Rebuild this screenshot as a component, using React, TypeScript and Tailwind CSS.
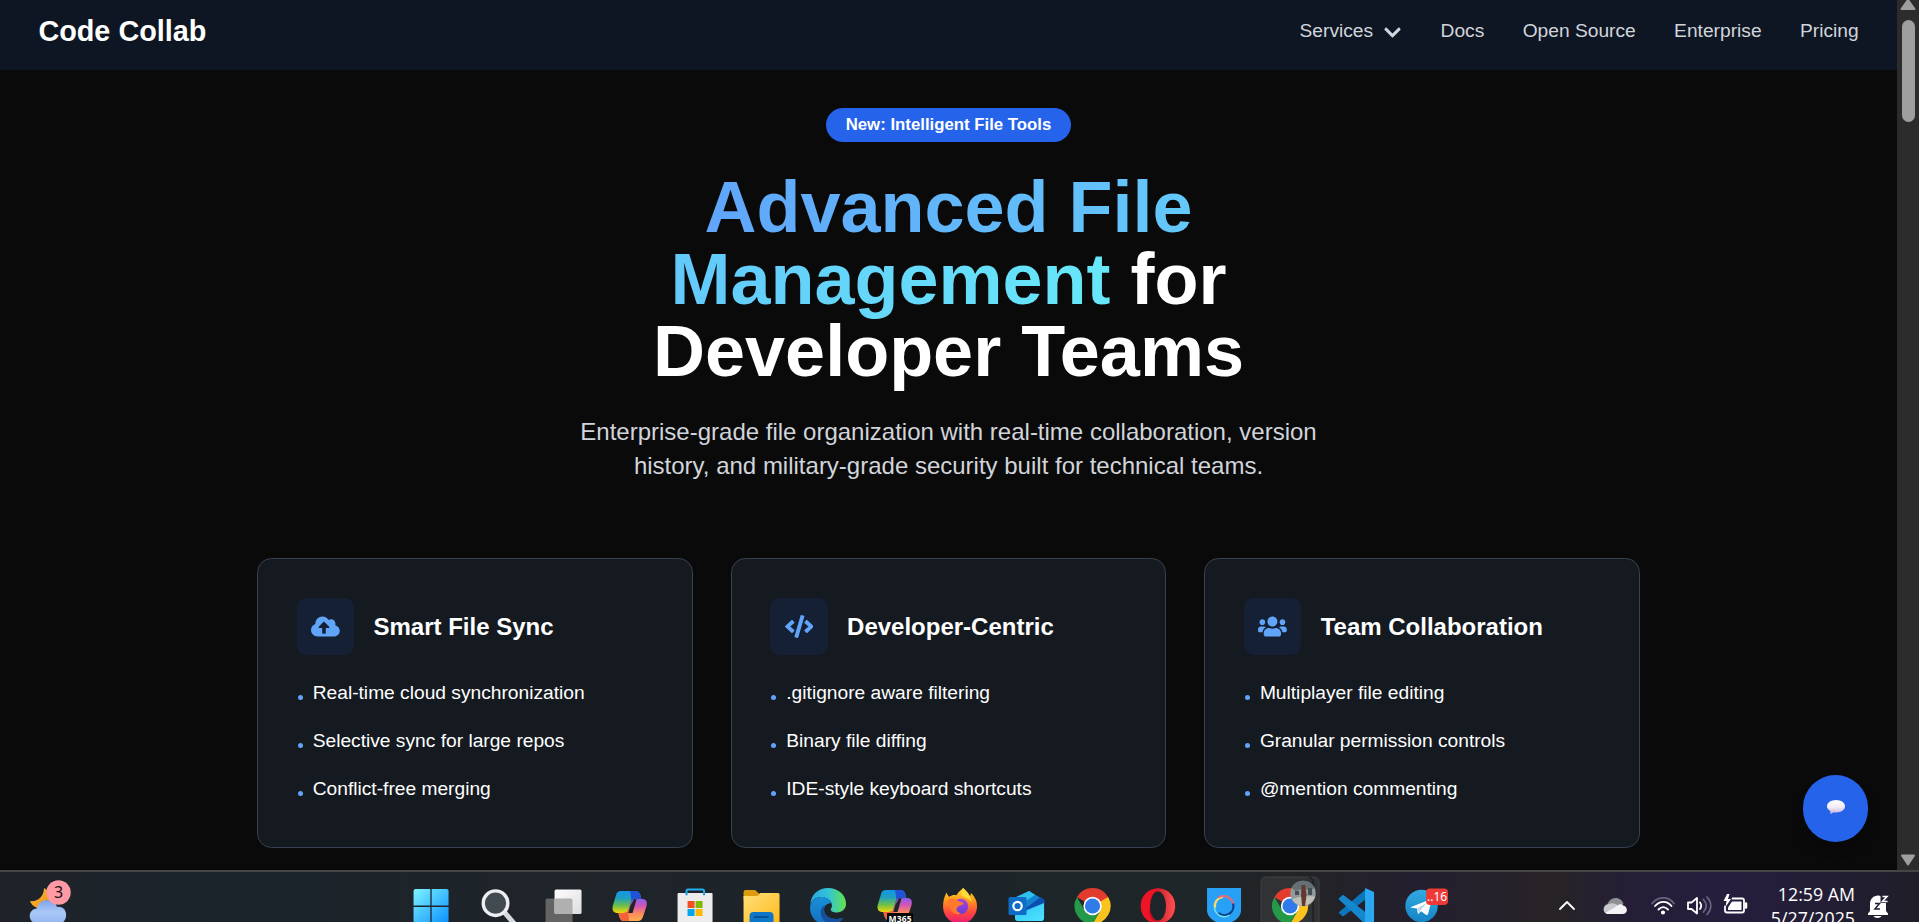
import { FaChevronDown, FaCloudUploadAlt, FaCode, FaUsers } from "react-icons/fa";
import type { ReactNode } from "react";

const navLinks = ["Docs", "Open Source", "Enterprise", "Pricing"];

const cards: { title: string; icon: ReactNode; items: string[] }[] = [
  {
    title: "Smart File Sync",
    icon: <FaCloudUploadAlt className="h-[23px] w-[28.8px]" />,
    items: ["Real-time cloud synchronization", "Selective sync for large repos", "Conflict-free merging"],
  },
  {
    title: "Developer-Centric",
    icon: <FaCode className="h-[23px] w-[28.8px]" />,
    items: [".gitignore aware filtering", "Binary file diffing", "IDE-style keyboard shortcuts"],
  },
  {
    title: "Team Collaboration",
    icon: <FaUsers className="h-[23px] w-[28.8px]" />,
    items: ["Multiplayer file editing", "Granular permission controls", "@mention commenting"],
  },
];

function Icon({ children }: { children: ReactNode }) {
  return (
    <svg viewBox="0 0 66 50" className="h-[50px] w-[66.1px] shrink-0">
      {children}
    </svg>
  );
}

function Gradient({ id, stops, vertical }: { id: string; stops: string[]; vertical?: boolean }) {
  return (
    <linearGradient id={id} x1="0" y1="0" x2={vertical ? "0" : "1"} y2="1">
      {stops.map((c, i) => (
        <stop key={i} offset={i / (stops.length - 1)} stopColor={c} />
      ))}
    </linearGradient>
  );
}

function ChromeShape() {
  return (
    <g>
      <path d="M33 34 17.400 25A18 18 0 0 1 48.600 25Z" fill="#e33b2e" />
      <path d="M33 25H48.600A18 18 0 0 1 33 52L40.800 38.500Z" fill="#fcc31e" />
      <path d="M17.400 25A18 18 0 0 0 33 52L40.800 38.500 33 43 25.200 38.500Z" fill="#249a48" />
      <path d="M17.400 25H48.600L40 30H26Z" fill="#e33b2e" />
      <circle cx="33" cy="34" r="9.200" fill="#fff" />
      <circle cx="33" cy="34" r="7.600" fill="#2f7bea" />
    </g>
  );
}

function CopilotShape({ id }: { id: string }) {
  return (
    <g>
      <defs>
        <Gradient id={`${id}a`} vertical stops={["#1496e8", "#1f9fc0", "#6cc04a", "#f5d50a"]} />
        <Gradient id={`${id}b`} vertical stops={["#8b5cf0", "#d558b0", "#ff8a5a", "#ffb04c"]} />
      </defs>
      <path d="M25 19h14c3 0 4.500 1.500 5.300 4l1 3.500h-5.300c-3 0-4.500 1.500-5.300 4l-2 6.500c-.8 2.500-2 4-5 4h-6c-4 0-6-2.500-5-7l3.300-11c.8-2.500 2-4 5-4z" fill={`url(#${id}a)`} />
      <path d="M34 19h5c3 0 4.500 1.500 5.300 4l1 3.500h-5.300c-2.500 0-3.600 1-4.500 2.500z" fill="#2152d8" />
      <path d="M40 27h6c4 0 5.500 2.500 4.500 7l-3.300 10c-.8 3-2.500 5-5.500 5H28c-3 0-4-2-5-5l-.6-3h5c3 0 4.500-1.500 5.300-4l2-6c.8-2.500 2.300-4 5.300-4z" fill={`url(#${id}b)`} />
      <path d="M22.400 41h5c2.500 0 3.800-.7 4.700-2.400L33 49h-5c-3 0-4-2-5-5z" fill="#f4623a" />
      <path d="M34.500 33.500 38 27.300h2.500L36.500 41h-4.300z" fill="#1d242a" />
    </g>
  );
}

function TaskIcons() {
  return (
    <>
      <Icon>
        <defs><linearGradient id="win" gradientUnits="userSpaceOnUse" x1="16" y1="17" x2="50" y2="52"><stop stopColor="#7df3ff" /><stop offset="1" stopColor="#0a8fff" /></linearGradient></defs>
        <path d="M15.500 19a2 2 0 0 1 2-2H32.300V33.600H15.500zM33.600 17H48.500a2 2 0 0 1 2 2V33.600H33.600zM15.500 35H32.300V52H15.500zM33.600 35H50.500V52H33.600z" fill="url(#win)" />
      </Icon>
      <Icon>
        <path d="m41 41 9.500 11" stroke="#d6d9dd" strokeWidth="5" strokeLinecap="round" />
        <circle cx="31.500" cy="31.200" r="12.300" fill="#434b51" stroke="#eceeef" strokeWidth="3.400" />
      </Icon>
      <Icon>
        <defs><Gradient id="tv" stops={["#ffffff", "#dcdcdc"]} /></defs>
        <rect x="15.500" y="26.500" width="27" height="28" rx="1.500" fill="#646464" />
        <rect x="24.500" y="17.500" width="27" height="24.500" rx="1.500" fill="url(#tv)" />
        <path d="M24.500 26.500h16.500a1.500 1.500 0 0 1 1.500 1.500v14H26a1.500 1.500 0 0 1-1.500-1.500z" fill="#b0b0b0" />
      </Icon>
      <Icon><CopilotShape id="cp" /></Icon>
      <Icon>
        <path d="M24.500 24v-5a1.500 1.500 0 0 1 1.500-1.500h14.500a1.500 1.500 0 0 1 1.500 1.500v5" fill="none" stroke="#20b0ee" strokeWidth="2" />
        <path d="M15.500 22a1 1 0 0 1 1-1h33a1 1 0 0 1 1 1v32h-35z" fill="#ececec" />
        <path d="M24.500 21v2.300M42 21v2.300" stroke="#1599dc" strokeWidth="2" />
        <path d="M25.500 29h7v7h-7z" fill="#f25022" /><path d="M33.500 29h7v7h-7z" fill="#7fba00" />
        <path d="M25.500 37h7v7h-7z" fill="#00a4ef" /><path d="M33.500 37h7v7h-7z" fill="#ffb900" />
      </Icon>
      <Icon>
        <defs><Gradient id="fold" stops={["#ffe07a", "#ffb91c"]} /></defs>
        <path d="M15.500 20a2 2 0 0 1 2-2h9.500l4 3.500h18v6H15.500z" fill="#dc9b0c" />
        <path d="M15.500 24h14l3-3H50a1.500 1.500 0 0 1 1.500 1.500V52h-36z" fill="url(#fold)" />
        <path d="M21.500 52v-8a4 4 0 0 1 4-4h16a4 4 0 0 1 4 4v8z" fill="#0d76c6" />
        <path d="M26 45h14.500" stroke="#074e91" strokeWidth="1.800" />
      </Icon>
      <Icon>
        <defs>
          <linearGradient id="edge"><stop stopColor="#28a6de" /><stop offset=".5" stopColor="#33c3d8" /><stop offset="1" stopColor="#64e34c" /></linearGradient>
          <Gradient id="edgeb" vertical stops={["#178fda", "#1670bd"]} />
        </defs>
        <path d="M15.300 32C16 22 24 16 33 16c10 0 18 7 18 15.500 0 5.500-4 9-9 9-4 0-6.300-1.300-6.300-3 0-1 1.200-1.700 1.200-4 0-5-5-8.500-10.500-8.500-5 0-9 2.500-11.100 7z" fill="url(#edge)" />
        <path d="M15 36c0-7 5.500-11 11.500-11 5 0 9 2.700 10 6.500-2.500-.8-7.500 1-7.500 6.500 0 6 6.500 9 11.500 9 4 0 6-1.500 7.500-1C45 51 39 53 33 53c-10 0-18-7-18-17z" fill="url(#edgeb)" />
        <path d="M30 33c-7 4-5 14 2 18h6c5-.5 8-2 10-5-1.500-.5-3.500 1-7.500 1-5 0-11.500-3-11.500-9 0-2 .5-4 1-5z" fill="#154f9e" />
      </Icon>
      <Icon>
        <g transform="translate(0 -1)"><CopilotShape id="cm" /></g>
        <rect x="26" y="41" width="26" height="12" fill="#050505" />
        <text x="39" y="49.500" textAnchor="middle" fontSize="8.500" fontWeight="700" fill="#fff" fontFamily="Noto Sans, sans-serif" textLength="23">M365</text>
      </Icon>
      <Icon>
        <defs><Gradient id="ff" vertical stops={["#ffe226", "#ff9a1f", "#ff4a3c", "#e8177b"]} /><Gradient id="ffp" vertical stops={["#a942e6", "#6a3fd0"]} /></defs>
        <path d="M19.500 20.500c.8 2 1.500 3.300 2.500 4.300 3-1.800 5-2 7.500-1.500 2-4 4.500-4.800 6.500-7.300 3 2.500 4 5 7 8.500l1-3.500c4 4 6 8 6 13 0 9.500-7.500 18-17 18s-17-8-17-17.500c0-5 1-9.500 3.500-14z" fill="url(#ff)" />
        <circle cx="33.500" cy="34.500" r="7.700" fill="url(#ffp)" />
        <path d="M20 29c3-3.500 7-3 9.500-1l3 1.500c3 .5 4 1 4 2.500-2 1.800-5 1.300-6.500 3.500-1.500 3 1 5.500 4 5.500-4 3-10 0-11-5.500z" fill="#ff7a2b" />
        <path d="M36 16c5 4 8.500 9 8.500 14-1.800-2-3-3.200-6.500-4.500-2.500-1-4-1.500-4-3.500 0-2.500 1.500-4 2-6z" fill="#ffd83a" />
      </Icon>
      <Icon>
        <defs><Gradient id="olb" stops={["#28c4f4", "#52e2ff"]} /></defs>
        <path d="m23 26 13-7 15 9v18a3 3 0 0 1-3 3H25a3 3 0 0 1-3-3z" fill="#1482d2" />
        <path d="M23 25 36 19l6 4-19 12z" fill="#2fc1f0" />
        <path d="m30 38 18-13 3.500 3v4L34 44z" fill="#0a4fae" />
        <path d="M22 43 51 31v15a3 3 0 0 1-3 3H25a3 3 0 0 1-3-3z" fill="url(#olb)" />
        <rect x="15.500" y="25" width="18" height="18" rx="1.500" fill="#0f6cc6" />
        <circle cx="24.500" cy="34" r="4.200" fill="none" stroke="#fff" strokeWidth="2.200" />
      </Icon>
      <Icon><g transform="translate(.5 0)"><ChromeShape /></g></Icon>
      <Icon>
        <defs><linearGradient id="opb"><stop stopColor="#b20018" /><stop offset="1" stopColor="#ff5252" /></linearGradient></defs>
        <ellipse cx="33" cy="34" rx="17.300" ry="17.500" fill="#f0101f" />
        <path d="M33 16.500c22.500 0 22.500 35 0 35-4 0-8-1.500-10.500-4.500l6-29z" fill="url(#opb)" />
        <path d="M33 16.500c-23 0-23 35 0 35-12-2-12-31 0-33z" fill="#ec1427" />
        <ellipse cx="33" cy="34" rx="8" ry="14.500" fill="#1d242a" />
      </Icon>
      <Icon>
        <path d="M16 16h34v22c0 8-8 12.500-17 15-9-2.500-17-7-17-15z" fill="#27a0f5" />
        <path d="M24 36a9 9 0 0 1 8-11" fill="none" stroke="#f8dc68" strokeWidth="2.200" />
        <path d="M27 25.500a10 10 0 0 1 15.200 7" fill="none" stroke="#ee6972" strokeWidth="2" />
        <path d="M42 31.500a9 9 0 0 1-14.500 9.500" fill="none" stroke="#0b3f91" strokeWidth="2.200" />
        <path d="M23.500 35a9.600 9.600 0 0 0 15 8" fill="none" stroke="#74e7df" strokeWidth="1.400" />
      </Icon>
      <Icon>
        <path d="M4 50V10a5 5 0 0 1 5-5H57a5 5 0 0 1 5 5V50" fill="#303234" stroke="#414345" />
        <path d="M51.500 5a5 5 0 0 1 4.500 5V50" fill="none" stroke="#222527" strokeWidth="2" />
        <ChromeShape />
        <circle cx="46" cy="21.500" r="12.700" fill="#929b9b" />
        <path d="M34.500 16a12.700 12.700 0 0 1 23 0l-4 2-8-1-7 2z" fill="#657074" />
        <path d="M35 27.500c5-3 15-4 23-3a12.700 12.700 0 0 1-20 6.500z" fill="#c0c0b7" />
        <path d="M44.500 13h3.500l1.500 10-1.500 11h-3l-1-11z" fill="#65382f" />
        <path d="M51 16h4v7h-4zM38 19h4v4h-4z" fill="#444d50" />
      </Icon>
      <Icon>
        <path d="m15.500 27 3-3c1-1 2-.8 3 0L43 41v9.500z" fill="#1183cb" />
        <path d="m15.500 40.500 3 3c1 1 2 .8 3 0L43 27V17z" fill="#0c76ba" />
        <path d="m42 16 9 4v30l-9 2z" fill="#2aa8f2" />
        <path d="m15.500 27 3-3c1-1 2-.8 3 0L42 40v12z" fill="#1687cf" />
      </Icon>
      <Icon>
        <defs><Gradient id="tg" vertical stops={["#32a9e1", "#1585c5"]} /></defs>
        <circle cx="32.500" cy="34" r="16.200" fill="url(#tg)" />
        <path d="m22 35 19-7.500c1.200-.4 1.700.2 1.400 1.400L39 42c-.3 1.200-1.200 1.400-2.200.7l-4.700-3.500-2.300 2.200c-.5.500-1 .3-1.100-.4l-.7-4.500-5.600-.7c-1-.2-1-.6-.4-.8z" fill="#fff" />
        <path d="m28.500 36.300 10-6-7.200 8-.9 3z" fill="#bad5e6" />
        <rect x="37" y="16.500" width="22" height="16.500" rx="4" fill="#ee3a37" />
        <text x="48" y="28.800" textAnchor="middle" fontSize="12" fill="#fff" fontFamily="Noto Sans, sans-serif">..16</text>
      </Icon>
    </>
  );
}

function Weather() {
  return (
    <svg viewBox="0 0 60 50" className="ml-[20px] h-[50px] w-[60px] shrink-0">
      <defs><Gradient id="moon" stops={["#fbc02d", "#ef8a17"]} /><Gradient id="wc" vertical stops={["#7fa2ee", "#a9c8f7", "#93b6f2"]} /></defs>
      <path d="M24 16c5 3 8 8 7 14-1 6-8 9-14 6-4-2-6-4-7-7 7 1 14-4 14-13z" fill="url(#moon)" />
      <path d="M19 52c-12 0-12-15-2-15.500C18 31 22 28 27 28c5 0 9 3 10 7 12-2 12 17 1 17z" fill="url(#wc)" />
      <circle cx="38.500" cy="20.500" r="12.200" fill="#ff99a4" />
      <text x="38.500" y="26" textAnchor="middle" fontSize="16" fill="#111" fontFamily="Noto Sans, sans-serif">3</text>
    </svg>
  );
}

function Tray() {
  return (
    <svg viewBox="1549 872 210 50" className="h-[50px] w-[210px] shrink-0" fill="none" stroke="#fff" strokeWidth="1.800" strokeLinecap="round" strokeLinejoin="round">
      <path d="m1560 909 7-7 7 7" />
      <g stroke="none">
        <path d="M1607 907c0-5 4-9 8.500-9 4 0 7 2.500 8 6l-7 7z" fill="#8f8f96" />
        <path d="M1608 914c-6 0-6-10 1-10 3.500-1.500 7-.5 9 2l-4 8z" fill="#c9c9cd" />
        <path d="M1606 912.500c3-2 9-5 12-7.500 1.500-1 4-1 5 .5 5 .5 5.500 8.500-.5 8.500h-14.500c-1 0-2-.5-2-1.500z" fill="#f4f4f6" />
      </g>
      <g>
        <path d="M1652 903.500c6.500-7.500 16.500-7.500 22 0" stroke="#6a6480" />
        <path d="M1655 906c5-5.500 12-5.500 16.500 0M1658.500 909.500c3-3 6.500-3 9.500 0" />
        <circle cx="1663" cy="912.500" r="1.200" fill="#fff" />
      </g>
      <path d="M1688 902.500v6.500h3.500l5.500 4.500v-15.500l-5.500 4.500z" />
      <path d="M1700 902.500c1.500 2 1.500 4.500 0 6.500" />
      <path d="M1703.500 899.500c3.500 4 3.500 8.500 0 12.500M1707 897c5 5.500 5 12 0 17.500" stroke="#6a6480" />
      <path d="M1732.500 898.500h9.500a2 2 0 0 1 2 2v10a2 2 0 0 1-2 2h-15a2 2 0 0 1-2-2v-4" />
      <path d="M1746 903.500v4" strokeWidth="2.500" />
      <path d="M1732 901.500h9.500v8.500h-13.500v-2.500z" fill="#fff" stroke="none" />
      <path d="m1727 894-3.500 7h3l-1 6 5.500-8h-3l1.500-5z" fill="#fff" stroke="none" />
    </svg>
  );
}

function Bell() {
  return (
    <svg viewBox="1865 872 30 50" className="ml-[9px] h-[50px] w-[30px] shrink-0">
      <path d="M1871 911v-7c0-5 3.500-8.500 8-8.500s8 3.500 8 8.500v7l2 2.500v1.500h-20v-1.500z" fill="#fff" />
      <path d="M1874.500 916h8c-1 2.500-7 2.500-8 0z" fill="#fff" />
      <path d="M1876 903.500h4.500l-4.500 5.500h5" fill="none" stroke="#241e35" strokeWidth="1.500" />
      <path d="M1881.500 894.500h8v8.500h-8z" fill="#241e35" />
      <path d="M1883.500 896.500h4.500l-4.500 5h5" fill="none" stroke="#fff" strokeWidth="1.600" />
    </svg>
  );
}

export default function App() {
  return (
    <div className="relative flex h-[922px] w-[1919px] flex-col overflow-hidden bg-[#0a0a0a] font-['Liberation_Sans',Arial,sans-serif] text-white">
      <div className="flex h-[870px] shrink-0">
        <div className="w-[1897px]">
          <header className="flex h-[70px] items-center justify-between bg-[#0f1623] px-[38.4px] pb-[8px]">
            <div className="pt-px text-[28.8px] font-bold">Code Collab</div>
            <nav className="flex gap-[38.4px] text-[19.2px] text-[#d1d5db]">
              <span className="mr-px flex items-center gap-[11px]">
                Services <FaChevronDown className="mt-[3px] h-[19px] w-[17px]" />
              </span>
              {navLinks.map((n) => (
                <span key={n}>{n}</span>
              ))}
            </nav>
          </header>
          <main className="flex flex-col items-center pt-[38px]">
            <span className="rounded-full bg-[#2563eb] px-[19.2px] py-[4.8px] text-[16.8px] leading-[24px] font-bold">
              New: Intelligent File Tools
            </span>
            <h1 className="mt-[29px] w-[680px] text-center text-[72px] leading-[72px] font-bold">
              <span className="bg-linear-to-r from-[#60a5fa] to-[#67e8f9] bg-clip-text text-transparent">Advanced File Management</span> for Developer Teams
            </h1>
            <p className="mt-[28.8px] w-[768px] text-center text-[24px] leading-[33.6px] text-[#d1d5db]">
              Enterprise-grade file organization with real-time collaboration, version history, and military-grade security built for technical teams.
            </p>
            <div className="mt-[75.8px] grid w-[1382.4px] grid-cols-3 gap-[38.4px]">
              {cards.map((c) => (
                <section key={c.title} className="h-[289.6px] rounded-[14.4px] border border-[#374151] bg-[#151a21] p-[38.4px]">
                  <div className="flex items-center gap-[19.2px]">
                    <div className="grid size-[57.6px] place-items-center rounded-[9.6px] bg-[#162034] text-[#60a5fa]">{c.icon}</div>
                    <h3 className="text-[24px] font-bold">{c.title}</h3>
                  </div>
                  <ul className="mt-[24px] flex flex-col gap-[19.2px]">
                    {c.items.map((t) => (
                      <li key={t} className="flex items-center gap-[10px] text-[19.2px] leading-[28.8px]">
                        <span className="mt-[8px] ml-px size-[5px] rounded-full bg-[#60a5fa]" />
                        {t}
                      </li>
                    ))}
                  </ul>
                </section>
              ))}
            </div>
          </main>
        </div>
        <div className="flex w-[22px] flex-col items-center justify-between bg-[#2c2c2c] pb-[4px]">
          <div className="flex flex-col items-center">
            <svg viewBox="0 0 16 11" className="h-[11px] w-[16px]"><path d="M8 0 14.500 9H1.500Z" fill="#9f9f9f" stroke="#9f9f9f" strokeWidth="2" strokeLinejoin="round" /></svg>
            <div className="mt-[9px] h-[102px] w-[13px] rounded-full bg-[#9f9f9f]" />
          </div>
          <svg viewBox="0 0 16 12" className="h-[12px] w-[16px]"><path d="M8 10.500 14 1.500H2Z" fill="#9f9f9f" stroke="#9f9f9f" strokeWidth="2" strokeLinejoin="round" /></svg>
        </div>
      </div>

      <div className="absolute top-[775px] left-[1803px] grid h-[67px] w-[65px] place-items-center rounded-full bg-[#2563eb] pb-[3px] shadow-lg">
        <svg viewBox="0 0 18 14" className="h-[14px] w-[18px]">
          <defs><Gradient id="bub" vertical stops={["#ffffff", "#f4edf8", "#c5b1dc"]} /></defs>
          <path d="M9.200 0C14 0 18 2.800 18 6.300s-4 6.200-8.800 6.200c-1 0-2-.1-2.800-.3-.8.800-2 1.500-3.200 1.700.4-.9.400-1.900.1-2.900C1.200 9.900 0 8.200 0 6.300 0 2.800 4 0 9.200 0z" fill="url(#bub)" />
        </svg>
      </div>

      <footer className="flex h-[52px] shrink-0 border-t-2 border-[#434649] bg-[linear-gradient(90deg,#1f2329_0%,#1b242b_12%,#1f2429_30%,#1c2429_45%,#1e2629_62%,#232326_68%,#241f2f_74%,#272326_81%,#251e36_85%,#251e3d_90%,#231e35_95%,#1f1e28_100%)]">
        <Weather />
        <div className="ml-[318px] flex">
          <TaskIcons />
        </div>
        <div className="ml-[93.5px] flex">
          <Tray />
          <div className="w-[96px] pt-[10px] text-right font-['Open_Sans','Noto_Sans',sans-serif] text-[17.8px] leading-[24px] whitespace-nowrap text-white">
            <div>12:59 AM</div>
            <div>5/27/2025</div>
          </div>
          <Bell />
        </div>
      </footer>
    </div>
  );
}
